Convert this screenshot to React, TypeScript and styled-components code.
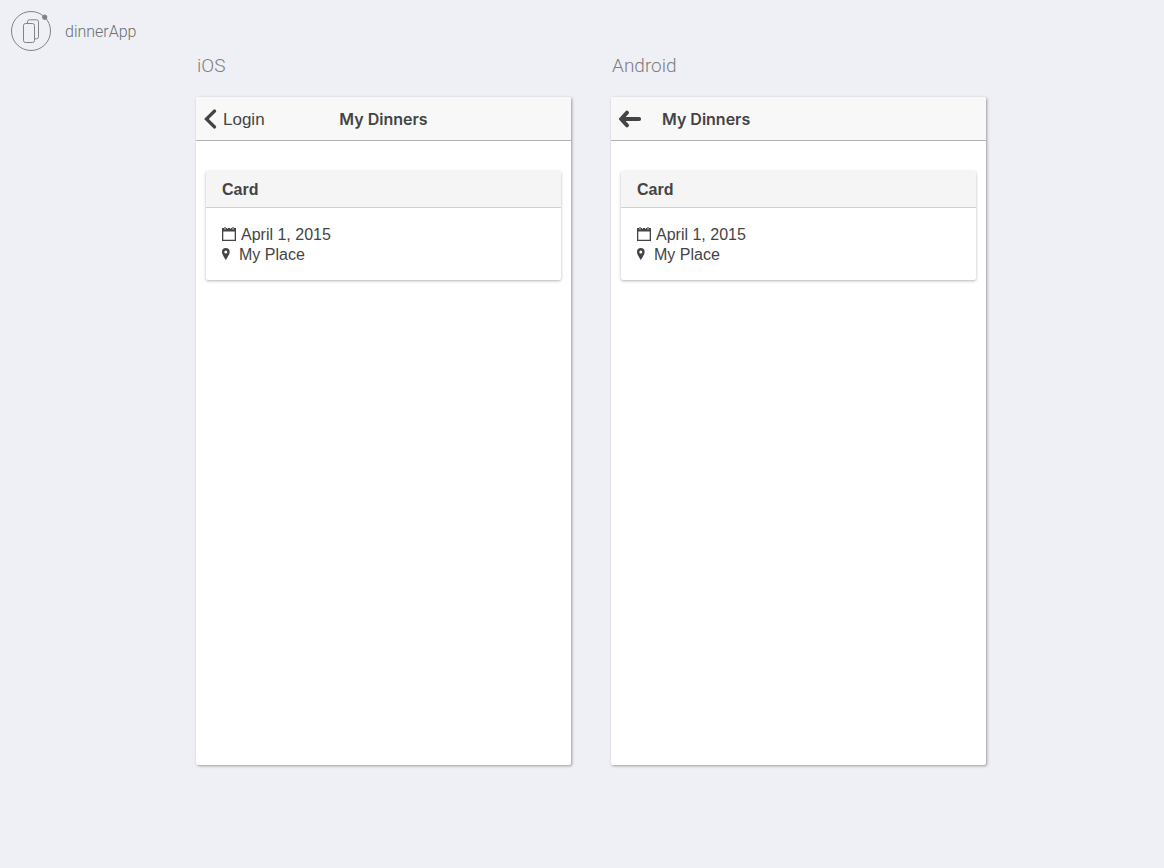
import React from "react";
import styled, { createGlobalStyle } from "styled-components";

const GlobalStyle = createGlobalStyle`
  *, *::before, *::after { box-sizing: border-box; }
  body {
    margin: 0;
    background: #eff0f5;
    color: #444;
    font-family: "Liberation Sans", Arial, sans-serif;
    font-size: 16px;
    line-height: 20px;
  }
`;

const TopBar = styled.header`
  display: flex;
  align-items: center;
  gap: 13px;
  height: 52px;
  padding: 10px 10px 0;
  color: #6c6e72;
  font-family: Roboto, sans-serif;
  font-weight: 300;
`;

const Logo = styled.svg`
  width: 42px;
  height: 42px;
  flex: none;
  color: #808286;
`;

const AppName = styled.h1`
  margin: 0;
  padding-top: 2px;
  font-size: 16px;
  font-weight: 300;
`;

const Previews = styled.main`
  display: flex;
  justify-content: center;
  gap: 40px;
  padding: 0 0 40px 18px;
`;

const Preview = styled.section`
  flex: 0 1 375px;
`;

const Platform = styled.h2`
  margin: 0;
  padding: 4px 1px 21px;
  color: #7c7d81;
  font-family: Roboto, sans-serif;
  font-size: 19px;
  font-weight: 300;
  line-height: 20px;
`;

const Screen = styled.div`
  aspect-ratio: 375 / 668;
  overflow: hidden;
  border-radius: 2px;
  background: #fff;
  box-shadow: 1px 1px 3px rgba(0, 0, 0, 0.36);
`;

const NavBar = styled.header<{ $centered: boolean }>`
  display: grid;
  grid-template-columns: ${(p) => (p.$centered ? "1fr auto 1fr" : "43px auto")};
  align-items: center;
  height: 44px;
  padding: 0 8px;
  border-bottom: 1px solid #b2b2b2;
  background: #f8f8f8;
`;

const BackButton = styled.button`
  display: flex;
  align-items: center;
  gap: 6px;
  padding: 0;
  border: 0;
  background: none;
  color: #444;
  font: inherit;
  font-size: 17px;
  cursor: pointer;
`;

const BackLabel = styled.span`
  padding-top: 2px;
`;

const NavTitle = styled.h3`
  margin: 0;
  font-family: Inter, sans-serif;
  font-size: 16px;
  font-weight: 600;
`;

const Card = styled.article`
  margin: 30px 10px 0;
  border-radius: 2px;
  background: #fff;
  box-shadow: 0 1px 3px rgba(0, 0, 0, 0.3);
`;

const CardTitle = styled.h4`
  margin: 0;
  padding: 9px 16px 7px;
  border-bottom: 1px solid #d0d0d4;
  border-radius: 2px 2px 0 0;
  background: #f5f5f6;
  font-size: 16px;
  font-weight: 700;
`;

const CardBody = styled.div`
  padding: 17px 16px 15px;
`;

const Detail = styled.p<{ $gap: number }>`
  display: flex;
  align-items: center;
  gap: ${(p) => p.$gap}px;
  margin: 0;

  svg {
    margin-bottom: 2px;
  }
`;

const ChevronIcon = () => (
  <svg width="13" height="22" viewBox="0 0 13 22" fill="none" stroke="currentColor" strokeWidth="3.2" strokeLinecap="round" aria-hidden="true">
    <path d="M10.6 3 2.4 11l8.2 8" />
  </svg>
);

const ArrowIcon = () => (
  <svg width="23" height="18" viewBox="0 0 23 18" fill="none" stroke="currentColor" strokeWidth="3.8" strokeLinecap="round" strokeLinejoin="miter" aria-hidden="true">
    <path d="M8 2.6 2.2 9 8 15.4M3 9h17.2" />
  </svg>
);

const CalendarIcon = () => (
  <svg width="14" height="14" viewBox="0 0 14 14" aria-hidden="true">
    <path fill="currentColor" fillRule="evenodd" d="M0 1h2v1.2h2V1h1v.8h1V1h2v.8h1V1h1v1.2h2V1h2v13H0zM1.3 4.6v8.1h11.4V4.6z" />
    <path fill="currentColor" d="M2.4 0h1.2v2H2.4zM10.4 0h1.2v2h-1.2z" />
  </svg>
);

const PinIcon = () => (
  <svg width="8" height="12" viewBox="0 0 8 12" aria-hidden="true">
    <path fill="currentColor" fillRule="evenodd" d="M3.8 0A3.8 3.8 0 0 0 0 3.9C0 6.8 3.8 12 3.8 12s3.8-5.2 3.8-8.1A3.8 3.8 0 0 0 3.8 0zm0 2.4a1.5 1.5 0 1 1 0 3 1.5 1.5 0 0 1 0-3z" />
  </svg>
);

const DinnerCard = () => (
  <Card>
    <CardTitle>Card</CardTitle>
    <CardBody>
      <Detail $gap={5}>
        <CalendarIcon />
        April 1, 2015
      </Detail>
      <Detail $gap={9}>
        <PinIcon />
        My Place
      </Detail>
    </CardBody>
  </Card>
);

export default function App() {
  return (
    <>
      <GlobalStyle />
      <TopBar>
        <Logo viewBox="0 0 42 42" fill="none" stroke="currentColor" aria-hidden="true">
          <circle cx="21" cy="21" r="19.5" />
          <rect x="13.5" y="13.5" width="11" height="19" rx="2" />
          <path d="M17.5 13.5v-1.7a2 2 0 0 1 2-2h7a2 2 0 0 1 2 2v15a2 2 0 0 1-2 2h-2" />
          <circle cx="34.7" cy="7.2" r="2.2" fill="currentColor" />
        </Logo>
        <AppName>dinnerApp</AppName>
      </TopBar>
      <Previews>
        <Preview>
          <Platform>iOS</Platform>
          <Screen>
            <NavBar $centered>
              <BackButton type="button">
                <ChevronIcon />
                <BackLabel>Login</BackLabel>
              </BackButton>
              <NavTitle>My Dinners</NavTitle>
            </NavBar>
            <DinnerCard />
          </Screen>
        </Preview>
        <Preview>
          <Platform>Android</Platform>
          <Screen>
            <NavBar $centered={false}>
              <BackButton type="button" aria-label="Back">
                <ArrowIcon />
              </BackButton>
              <NavTitle>My Dinners</NavTitle>
            </NavBar>
            <DinnerCard />
          </Screen>
        </Preview>
      </Previews>
    </>
  );
}
